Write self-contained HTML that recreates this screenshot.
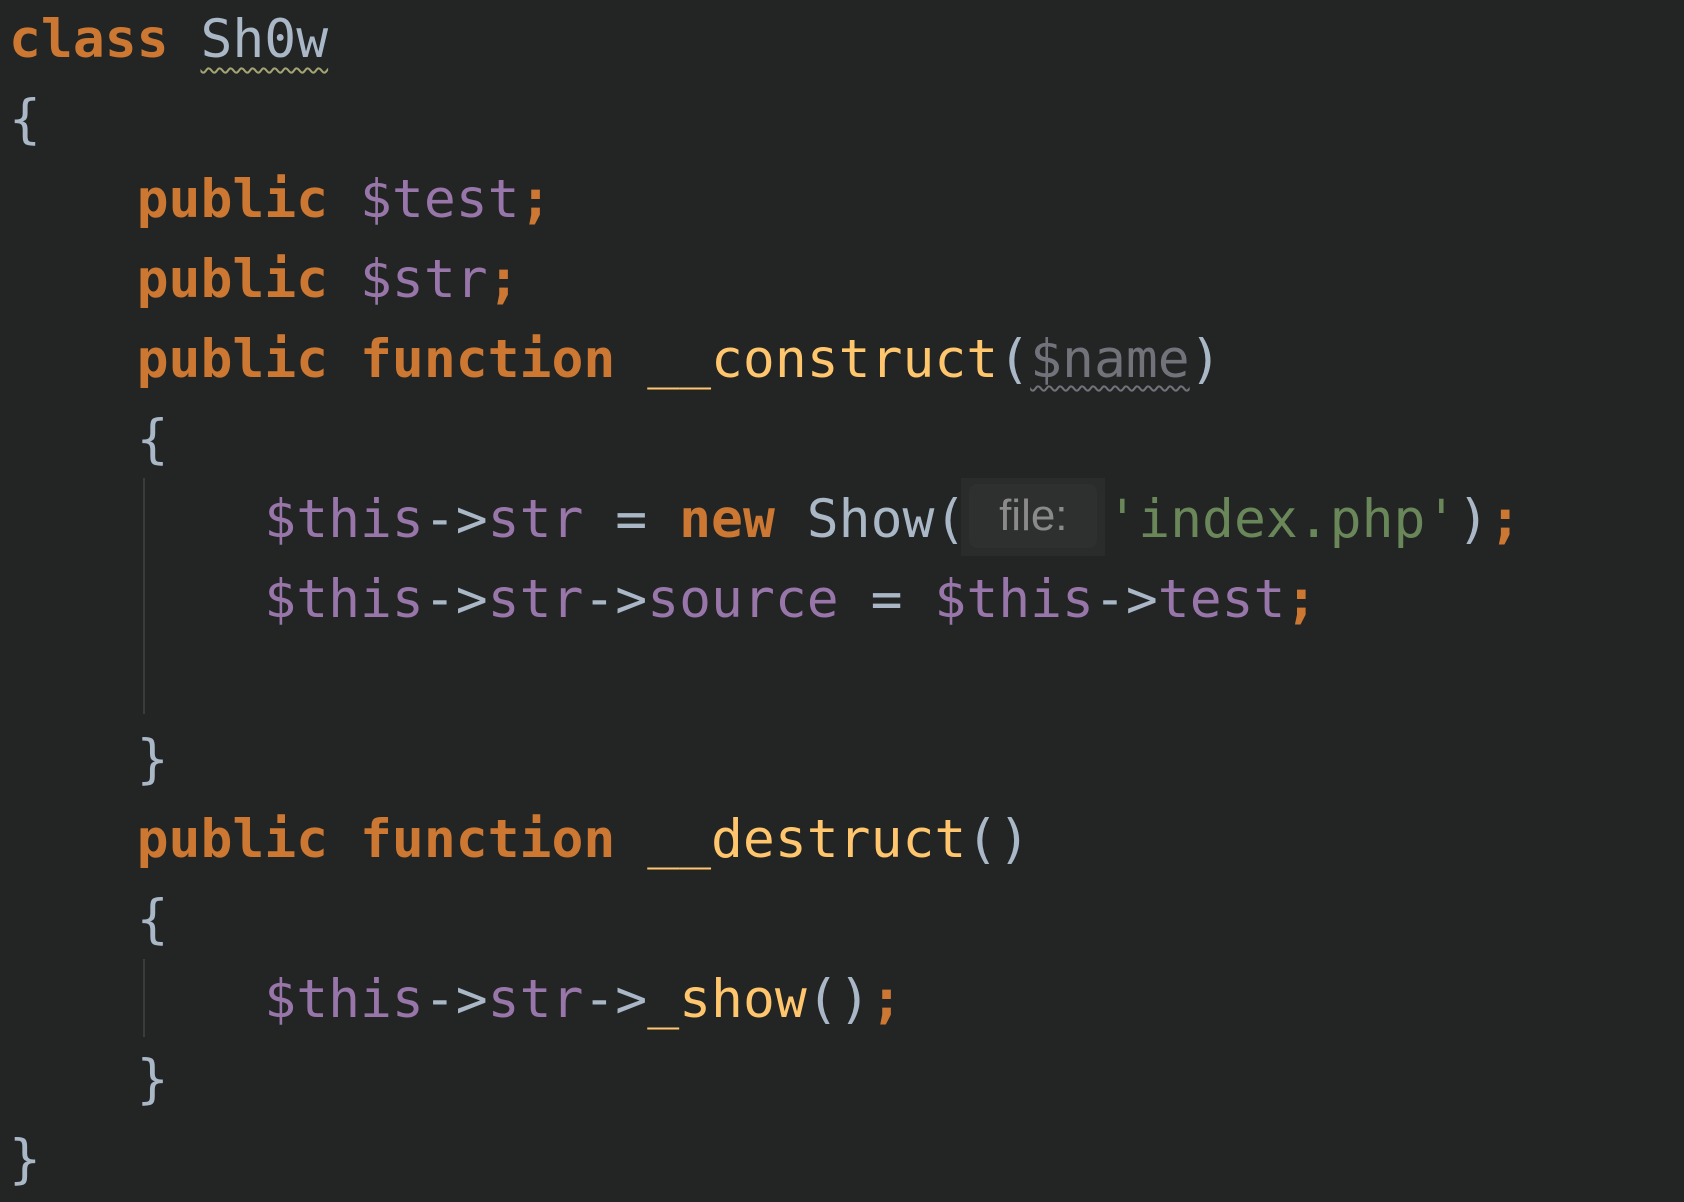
<!DOCTYPE html>
<html><head><meta charset="utf-8"><style>
html,body{margin:0;padding:0;}
body{width:1684px;height:1202px;background:#232525;overflow:hidden;position:relative;}
.code{position:absolute;left:9px;top:0;font-family:"DejaVu Sans Mono","Liberation Mono",monospace;font-size:53px;color:#a9b7c6;}
.code div{height:80px;line-height:80px;position:relative;white-space:pre}
.k{color:#cc7832;font-weight:bold}
.v{color:#9876aa}
.f{color:#ffc66d}
.s{color:#6a8759}
.u{color:#72737a;text-decoration:underline wavy #72737a;text-decoration-thickness:2px;text-underline-offset:8px}
.c{text-decoration:underline wavy #a5a573;text-decoration-thickness:2px;text-underline-offset:10px}
.h{display:inline-block;width:128px;height:64px;vertical-align:top;margin-top:4px;background:#2e2f2f;border-radius:8px;margin-left:3px;margin-right:9px;font-family:"Liberation Sans",sans-serif;font-size:44px;line-height:64px;color:#8a8a8a;text-align:center;position:relative}
.h:before{content:"";position:absolute;left:-8px;top:-6px;right:-8px;bottom:-8px;background:#2a2b2b;z-index:-1}
.g{position:absolute;left:143px;width:2px;background:#3a3b3b}
</style></head><body>
<div class="g" style="top:478px;height:236px"></div>
<div class="g" style="top:959px;height:78px"></div>
<div class="code"><div><span class="k">class</span> <span class="c">Sh0w</span></div><div>{</div><div>    <span class="k">public</span> <span class="v">$test</span><span class="k">;</span></div><div>    <span class="k">public</span> <span class="v">$str</span><span class="k">;</span></div><div>    <span class="k">public function</span> <span class="f">__construct</span>(<span class="u">$name</span>)</div><div>    {</div><div>        <span class="v">$this</span>-&gt;<span class="v">str</span> = <span class="k">new</span> Show(<span class="h">file:</span><span class="s">'index.php'</span>)<span class="k">;</span></div><div>        <span class="v">$this</span>-&gt;<span class="v">str</span>-&gt;<span class="v">source</span> = <span class="v">$this</span>-&gt;<span class="v">test</span><span class="k">;</span></div><div> </div><div>    }</div><div>    <span class="k">public function</span> <span class="f">__destruct</span>()</div><div>    {</div><div>        <span class="v">$this</span>-&gt;<span class="v">str</span>-&gt;<span class="f">_show</span>()<span class="k">;</span></div><div>    }</div><div>}</div></div>
</body></html>
